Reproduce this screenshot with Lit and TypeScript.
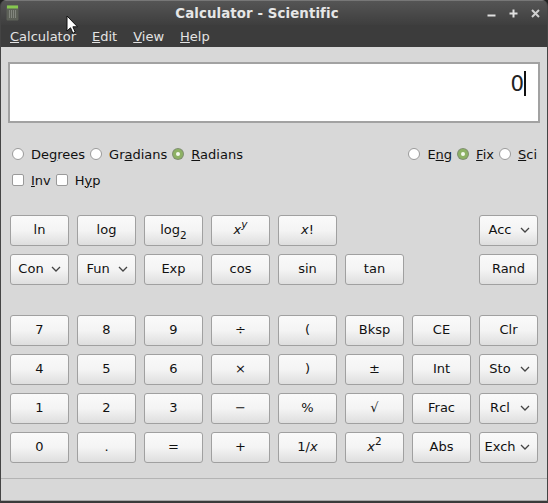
import { LitElement, html, css } from "lit";
import { customElement } from "lit/decorators.js";

type Key = { label?: unknown; menu?: boolean; blank?: boolean };

const k = (label: unknown): Key => ({ label });
const m = (label: string): Key => ({ label, menu: true });
const blank: Key = { blank: true };

const fnKeys: Key[] = [
  k("ln"), k("log"), k(html`log<sub>2</sub>`), k(html`<i>x</i><sup><i>y</i></sup>`), k(html`<i>x</i>!`), blank, blank, m("Acc"),
  m("Con"), m("Fun"), k("Exp"), k("cos"), k("sin"), k("tan"), blank, k("Rand"),
];

const numKeys: Key[] = [
  k("7"), k("8"), k("9"), k("÷"), k("("), k("Bksp"), k("CE"), k("Clr"),
  k("4"), k("5"), k("6"), k("×"), k(")"), k("±"), k("Int"), m("Sto"),
  k("1"), k("2"), k("3"), k("−"), k("%"), k("√"), k("Frac"), m("Rcl"),
  k("0"), k("."), k("="), k("+"), k(html`1/<i>x</i>`), k(html`<i>x</i><sup>2</sup>`), k("Abs"), m("Exch"),
];

@customElement("app-root")
export class AppRoot extends LitElement {
  static styles = css`
    :host {
      display: block;
      position: relative;
      width: 548px;
      height: 503px;
      overflow: hidden;
      background: #222;
      font-family: "DejaVu Sans", sans-serif;
      font-size: 13px;
      color: #111;
    }
    .window {
      height: 503px;
      border-radius: 6px 6px 0 0;
      display: flex;
      flex-direction: column;
      background: #3c3c3c;
      box-sizing: border-box;
      border-left: 1px solid #444;
      border-right: 1px solid #444;
      border-bottom: 2px solid #3a3a3a;
      overflow: hidden;
    }
    .titlebar {
      height: 25px;
      flex: none;
      display: flex;
      align-items: center;
      background: linear-gradient(#555, #3e3e3e);
      border-top: 1px solid #777;
      box-sizing: border-box;
      color: #e6e6e6;
    }
    .title {
      flex: 1;
      text-align: center;
      font-weight: bold;
      font-size: 13.33px;
      margin-left: 8px;
      letter-spacing: 0.1px;
    }
    .app-icon {
      margin-left: 5px;
      width: 14px;
      height: 16px;
      flex: none;
    }
    .controls {
      display: flex;
      gap: 11px;
      margin-right: 6px;
      flex: none;
    }
    .controls svg {
      width: 11px;
      height: 11px;
      display: block;
    }
    .menubar {
      height: 22px;
      flex: none;
      display: flex;
      gap: 16px;
      padding: 0 9px;
      align-items: center;
      color: #e4e4e4;
      background: #3c3c3c;
    }
    .content {
      flex: 1;
      background: #d8d8d8;
      display: flex;
      flex-direction: column;
      min-height: 0;
      border-bottom: 1px solid #a8a8a8;
    }
    .display {
      margin: 15px 7px 0 7px;
      height: 61px;
      flex: none;
      box-sizing: border-box;
      border: 2px solid #a2a2a2;
      background: #fff;
      display: flex;
      justify-content: flex-end;
      align-items: center;
      padding: 0 12px 18px 0;
      font-size: 21.3px;
      color: #222;
    }
    .caret {
      width: 2px;
      height: 25px;
      background: #111;
    }
    .options {
      margin: 21px 10px 0 11px;
      display: flex;
      justify-content: space-between;
      height: 20px;
      flex: none;
    }
    .group {
      display: flex;
      align-items: center;
    }
    .opt {
      display: flex;
      align-items: center;
      margin-right: 5px;
    }
    .group.right .opt:last-child { margin-right: 0; }
    .opt .mark { margin-right: 7px; }
    .radio {
      width: 10px;
      height: 10px;
      border-radius: 50%;
      border: 1px solid #9a9a9a;
      background: #fff;
      flex: none;
    }
    .radio.on {
      background: #f4f8ee;
      border: 3px solid #8db164;
      width: 4px;
      height: 4px;
      margin-left: 1px;
      margin-right: 8px;
      box-shadow: 0 0 0 1px #7f8f70;
    }
    .check {
      width: 10px;
      height: 10px;
      border: 1px solid #9a9a9a;
      border-radius: 2px;
      background: #fff;
      flex: none;
    }
    .checks {
      margin: 6px 0 0 11px;
      height: 20px;
      flex: none;
    }
    .checks .opt { margin-right: 5px; }
    .keys {
      display: grid;
      grid-template-columns: repeat(8, 59px);
      grid-auto-rows: 31px;
      gap: 8px;
      margin-left: 9px;
      flex: none;
    }
    .fn { margin-top: 25px; }
    .num { margin-top: 30px; }
    .key {
      box-sizing: border-box;
      border: 1px solid #a0a0a0;
      border-radius: 3px;
      background: linear-gradient(#fafafa 0%, #f4f4f4 50%, #dedede 100%);
      display: flex;
      align-items: center;
      justify-content: center;
      padding-bottom: 2px;
    }
    .key.menu {
      padding-right: 7px;
    }
    .key.menu span {
      flex: 1;
      text-align: center;
    }
    .key svg {
      width: 10px;
      height: 6px;
      flex: none;
    }
    sub, sup {
      font-size: 10.5px;
      line-height: 0;
    }
    sub { vertical-align: -5px; }
    sup { vertical-align: 6px; }
    .status {
      margin-top: auto;
      height: 21px;
      border-top: 1px solid #b4b4b4;
      flex: none;
    }
    .pointer {
      position: absolute;
      left: 66px;
      top: 15px;
      width: 13px;
      height: 20px;
    }
  `;

  private mnemonic(before: string, letter: string, after: string) {
    return html`<span>${before}<u>${letter}</u>${after}</span>`;
  }

  private option(type: "radio" | "radio on" | "check", before: string, letter: string, after: string) {
    return html`<div class="opt"><div class="mark ${type}"></div>${this.mnemonic(before, letter, after)}</div>`;
  }

  private key(item: Key) {
    if (item.blank) return html`<div></div>`;
    if (item.menu) {
      return html`<div class="key menu">
        <span>${item.label}</span>
        <svg viewBox="0 0 10 6"><path d="M1 1l4 4 4-4" fill="none" stroke="#444" stroke-width="1.3" /></svg>
      </div>`;
    }
    return html`<div class="key"><span>${item.label}</span></div>`;
  }

  render() {
    return html`
      <div class="window">
        <div class="titlebar">
          <svg class="app-icon" viewBox="0 0 14 16">
            <rect x="0.5" y="0" width="12" height="15.5" rx="1" fill="#5d6158" />
            <rect x="1" y="0.5" width="11" height="3" fill="#86c84f" />
            <path d="M3 6h7M3 8h7M3 10h7M3 12h7" stroke="#a9aca4" stroke-width="1" stroke-dasharray="1 1" />
          </svg>
          <div class="title">Calculator - Scientific</div>
          <div class="controls">
            <svg viewBox="0 0 11 11"><path d="M1.5 7.5h8" stroke="#e0e0e0" stroke-width="2" /></svg>
            <svg viewBox="0 0 11 11"><path d="M1.5 5.5h8M5.5 1.5v8" stroke="#e0e0e0" stroke-width="2" /></svg>
            <svg viewBox="0 0 11 11"><path d="M2 2l7 7M9 2l-7 7" stroke="#d0d0d0" stroke-width="2" /></svg>
          </div>
        </div>
        <div class="menubar">
          ${this.mnemonic("", "C", "alculator")}
          ${this.mnemonic("", "E", "dit")}
          ${this.mnemonic("", "V", "iew")}
          ${this.mnemonic("", "H", "elp")}
        </div>
        <div class="content">
          <div class="display"><span>0</span><div class="caret"></div></div>
          <div class="options">
            <div class="group">
              ${this.option("radio", "De", "g", "rees")}
              ${this.option("radio", "Gr", "a", "dians")}
              ${this.option("radio on", "", "R", "adians")}
            </div>
            <div class="group right">
              ${this.option("radio", "E", "n", "g")}
              ${this.option("radio on", "", "F", "ix")}
              ${this.option("radio", "", "S", "ci")}
            </div>
          </div>
          <div class="group checks">
            ${this.option("check", "", "I", "nv")}
            ${this.option("check", "H", "y", "p")}
          </div>
          <div class="keys fn">${fnKeys.map((item) => this.key(item))}</div>
          <div class="keys num">${numKeys.map((item) => this.key(item))}</div>
          <div class="status"></div>
        </div>
      </div>
      <svg class="pointer" viewBox="0 0 13 20">
        <path d="M1 1v15l3.5-3.2 2.4 5.4 2.4-1-2.4-5.4h4.6z" fill="#fff" stroke="#111" stroke-width="1" />
      </svg>
    `;
  }
}
